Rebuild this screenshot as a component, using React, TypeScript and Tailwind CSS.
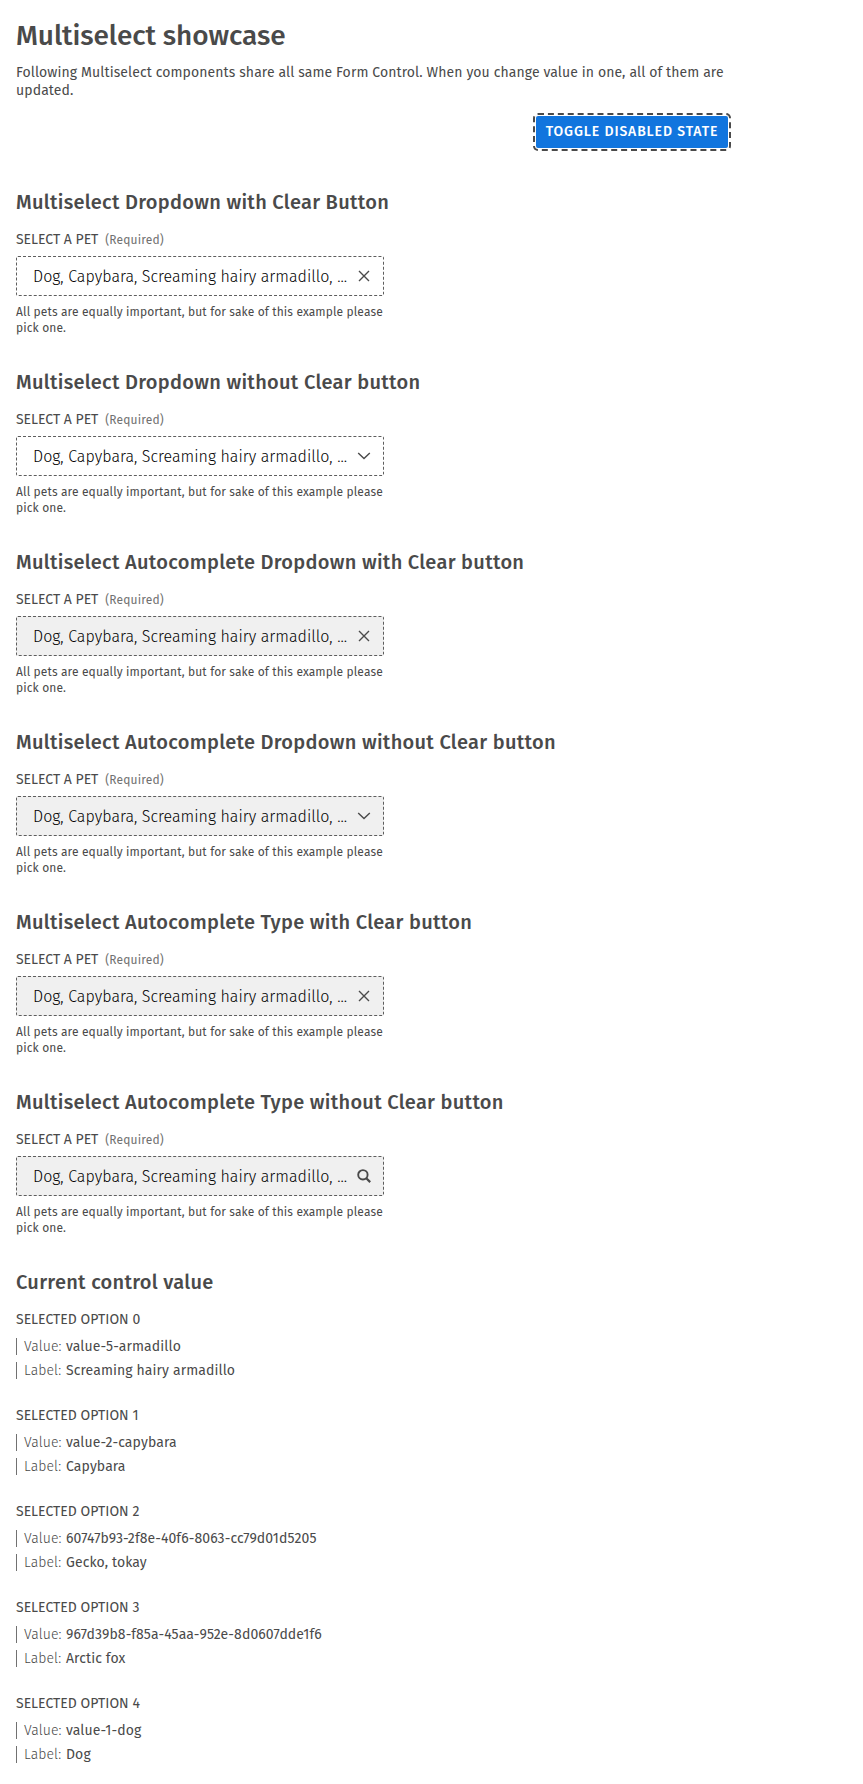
import React from 'react';

type IconName = 'close' | 'chevron' | 'search';

const fields: { title: string; icon: IconName; filled: boolean }[] = [
  { title: 'Multiselect Dropdown with Clear Button', icon: 'close', filled: false },
  { title: 'Multiselect Dropdown without Clear button', icon: 'chevron', filled: false },
  { title: 'Multiselect Autocomplete Dropdown with Clear button', icon: 'close', filled: true },
  { title: 'Multiselect Autocomplete Dropdown without Clear button', icon: 'chevron', filled: true },
  { title: 'Multiselect Autocomplete Type with Clear button', icon: 'close', filled: true },
  { title: 'Multiselect Autocomplete Type without Clear button', icon: 'search', filled: true },
];

const options = [
  { value: 'value-5-armadillo', label: 'Screaming hairy armadillo' },
  { value: 'value-2-capybara', label: 'Capybara' },
  { value: '60747b93-2f8e-40f6-8063-cc79d01d5205', label: 'Gecko, tokay' },
  { value: '967d39b8-f85a-45aa-952e-8d0607dde1f6', label: 'Arctic fox' },
  { value: 'value-1-dog', label: 'Dog' },
];

function Icon({ name }: { name: IconName }) {
  return (
    <svg className="size-4 shrink-0" viewBox="0 0 16 16" fill="none" stroke="#4a4a4a">
      {name === 'close' && <path d="M3 3 L13 13 M13 3 L3 13" strokeWidth="1.4" />}
      {name === 'chevron' && <path d="M2.2 5 L8 10.6 L13.8 5" strokeWidth="1.4" />}
      {name === 'search' && (
        <>
          <circle cx="6.9" cy="6.8" r="4.7" strokeWidth="1.9" />
          <path d="M10.3 10.2 L14.2 14.1" strokeWidth="2.2" />
        </>
      )}
    </svg>
  );
}

function Heading({ children }: { children: React.ReactNode }) {
  return <h2 className="text-[20px] leading-6 font-medium tracking-[0.29px]">{children}</h2>;
}

function Field({ title, icon, filled }: { title: string; icon: IconName; filled: boolean }) {
  return (
    <section className="flex h-[180px] flex-col">
      <Heading>{title}</Heading>
      <div className="mt-[18px] flex items-baseline text-sm leading-4 tracking-[-0.03px]">
        <span>SELECT A PET</span>
        <span className="ml-[7px] text-xs leading-4 tracking-[0.16px] text-[#717171]">(Required)</span>
      </div>
      <div
        className={`mt-2 flex h-10 w-[368px] items-center justify-between rounded-[2px] border border-dashed border-[#5e5e5e] pr-[11px] pl-4 ${filled ? 'bg-[#f0f0f0]' : 'bg-white'}`}
      >
        <span className="pt-[2px] text-base leading-5 font-light tracking-[0.02px] whitespace-nowrap text-black">
          Dog, Capybara, Screaming hairy armadillo, ...
        </span>
        <Icon name={icon} />
      </div>
      <p className="mt-2 w-[368px] text-xs leading-4 tracking-[0.12px]">
        All pets are equally important, but for sake of this example please pick one.
      </p>
    </section>
  );
}

function Detail({ name, value }: { name: string; value: string }) {
  return (
    <div className="mb-[7px] flex h-[17px] items-center border-l border-[#717171] pl-[7px] text-sm leading-[17px] tracking-[0.1px]">
      <span className="w-[42px] font-light">{name}:</span>
      <span>{value}</span>
    </div>
  );
}

export default function App() {
  return (
    <main className="h-[1784px] w-[728px] bg-white pt-5 pl-4 font-['Fira_Sans','Noto_Sans',sans-serif] text-[#4a4a4a]">
      <h1 className="text-[28px] leading-8 font-medium tracking-[-0.08px]">Multiselect showcase</h1>
      <p className="mt-3 text-sm leading-[18px] tracking-[0.1px]">
        Following Multiselect components share all same Form Control. When you change value in one, all of them are
        updated.
      </p>
      <div className="mt-4 mb-[42px] flex justify-end">
        <button className="h-8 w-[192px] rounded-[2px] bg-[#1175de] text-center text-sm leading-8 font-medium tracking-[0.9px] whitespace-nowrap text-white outline-2 outline-offset-1 outline-[#4a4a4a] outline-dashed">
          TOGGLE DISABLED STATE
        </button>
      </div>
      {fields.map((field) => (
        <Field key={field.title} {...field} />
      ))}
      <Heading>Current control value</Heading>
      <div className="mt-[18px]">
        {options.map((option, index) => (
          <div key={option.value} className="h-24">
            <h3 className="mb-[10px] text-sm leading-4">SELECTED OPTION {index}</h3>
            <Detail name="Value" value={option.value} />
            <Detail name="Label" value={option.label} />
          </div>
        ))}
      </div>
    </main>
  );
}
